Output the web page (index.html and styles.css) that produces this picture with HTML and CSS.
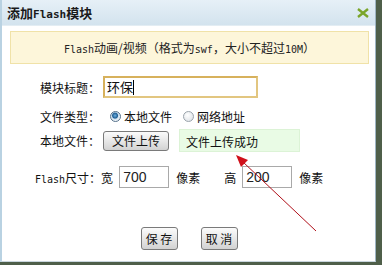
FILE: index.html
```
<!DOCTYPE html>
<html lang="zh-CN">
<head>
    <meta charset="UTF-8">
    <title>添加Flash模块</title>
    <link rel="stylesheet" href="styles.css">
</head>
<body>
    <div class="dialog">
        <!-- Title bar -->
        <div class="dialog-title">
            <span class="title-text">添加<span class="latin">Flash</span>模块</span>
            <svg class="close-icon" width="12" height="10" viewBox="0 0 12 10">
                <path d="M1 1 L11 9 M11 1 L1 9" stroke="#7aa52a" stroke-width="2.4" fill="none"/>
            </svg>
        </div>

        <div class="dialog-body">
            <div class="notice"><span class="latin">Flash</span>动画/视频（格式为<span class="latin">swf</span>，大小不超过<span class="latin">10M</span>）</div>

            <div class="form-row row-title">
                <span class="label">模块标题：</span>
                <div class="text-input focused">环保<span class="caret"></span></div>
            </div>

            <div class="form-row row-type">
                <span class="label">文件类型：</span>
                <span class="radio checked"></span><span class="radio-text">本地文件</span>
                <span class="radio second"></span><span class="radio-text">网络地址</span>
            </div>

            <div class="form-row row-file">
                <span class="label">本地文件：</span>
                <button class="btn upload-btn">文件上传</button>
                <div class="upload-ok">文件上传成功</div>
            </div>

            <div class="form-row row-size">
                <span class="label"><span class="latin">Flash</span>尺寸：宽</span>
                <div class="text-input size-input">700</div>
                <span class="unit">像素</span>
                <span class="label high">高</span>
                <div class="text-input size-input">200</div>
                <span class="unit">像素</span>
            </div>

            <div class="actions">
                <button class="btn action-btn">保 存</button>
                <button class="btn action-btn">取 消</button>
            </div>

            <!-- annotation arrow -->
            <svg class="arrow" width="382" height="265" viewBox="0 0 382 265">
                <line x1="316" y1="231" x2="243" y2="162" stroke="#b0101a" stroke-width="1"/>
                <polygon points="236,155 248,160 241,167" fill="#d0101a"/>
            </svg>
        </div>
    </div>
</body>
</html>
```

FILE: styles.css
```
body {
    margin: 0;
    padding: 0;
    width: 382px;
    height: 265px;
    overflow: hidden;
    background-color: #4f5f4a;
    font-family: "Noto Sans CJK SC", "Liberation Sans", sans-serif;
    font-size: 12px;
    color: #111;
}

.dialog {
    position: relative;
    width: 376px;
    height: 262px;
    background-color: #fff;
    border-left: 2px solid #b9d2e2;
    border-right: 1px solid #9fb5c4;
    border-bottom: 1px solid #c9d6de;
    box-sizing: border-box;
}

.dialog-title {
    height: 25px;
    display: flex;
    align-items: center;
    justify-content: space-between;
    padding: 0 6px 0 5px;
    background: linear-gradient(#e6f0f7, #d3e3ee);
    border-bottom: 1px solid #e3edf3;
}

.title-text {
    font-family: "Noto Sans CJK SC", sans-serif;
    font-weight: bold;
    font-size: 13px;
    color: #1a1a1a;
}

.title-text .latin {
    font-size: 11px;
    font-weight: bold;
}

.latin {
    font-family: "DejaVu Sans Mono", "Liberation Mono", monospace;
    font-size: 10px;
}

.close-icon {
    margin-top: 1px;
}

.dialog-body {
    padding-top: 5px;
}

.notice {
    margin: 0 6px 0 8px;
    height: 31px;
    line-height: 31px;
    background-color: #fdf6da;
    border: 1px solid #f0e2a8;
    text-align: center;
    font-size: 12px;
    color: #222;
}

.form-row {
    display: flex;
    align-items: center;
}

.label {
    font-size: 12px;
}

.row-title {
    margin-top: 12px;
    padding-left: 38px;
}

.row-type {
    margin-top: 10px;
    padding-left: 38px;
}

.row-file {
    margin-top: 4px;
    padding-left: 38px;
}

.row-size {
    margin-top: 14px;
    padding-left: 33px;
}

.text-input {
    box-sizing: border-box;
    height: 22px;
    border: 1px solid #a9a9a9;
    padding: 0 3px;
    font-family: "Liberation Sans", "Noto Sans CJK SC", sans-serif;
    font-size: 14px;
    line-height: 20px;
    display: flex;
    align-items: center;
}

.text-input.focused {
    width: 155px;
    margin-left: 3px;
    border: 2px solid #d9b86a;
    border-color: #d7b15c #e2c680 #e2c680 #d7b15c;
    padding: 0 2px;
    font-family: "Noto Sans CJK SC", sans-serif;
    font-size: 13px;
}

.caret {
    display: inline-block;
    width: 1px;
    height: 15px;
    background-color: #000;
}

.radio {
    box-sizing: border-box;
    width: 11px;
    height: 11px;
    margin-left: 10px;
    border-radius: 50%;
    border: 1px solid #9aa3ab;
    background: radial-gradient(circle at 40% 35%, #ffffff, #d8dde2);
}

.radio.second {
    margin-left: 11px;
}

.radio.checked {
    border-color: #55718a;
    background: radial-gradient(circle at 45% 40%, #6fb0e0 0, #1f5f95 2.5px, #cfe0ee 3.5px, #eef4f8 5px);
}

.radio-text {
    margin-left: 3px;
    font-size: 12px;
}

.btn {
    box-sizing: border-box;
    border: 1px solid #7a7a7a;
    border-radius: 3px;
    background: linear-gradient(#fbfbfb, #e3e3e3 60%, #d2d2d2);
    font-family: "Noto Sans CJK SC", sans-serif;
    color: #111;
    padding: 0;
    cursor: pointer;
}

.upload-btn {
    width: 66px;
    height: 20px;
    margin-left: 3px;
    font-size: 12px;
    line-height: 18px;
}

.upload-ok {
    box-sizing: border-box;
    width: 121px;
    height: 23px;
    margin-left: 10px;
    padding-left: 6px;
    line-height: 23px;
    background-color: #e9fbe5;
    border: 1px solid #dcf3d6;
    font-size: 12px;
}

.size-input {
    width: 50px;
    margin-left: 6px;
    color: #222;
}

.unit {
    margin-left: 7px;
    font-size: 12px;
}

.label.high {
    margin-left: 24px;
}

.actions {
    display: flex;
    justify-content: center;
    gap: 23px;
    margin-top: 39px;
    padding-left: 1px;
}

.action-btn {
    width: 37px;
    height: 23px;
    font-size: 12px;
    line-height: 21px;
}

.arrow {
    position: absolute;
    left: -2px;
    top: 0;
    pointer-events: none;
}
```
